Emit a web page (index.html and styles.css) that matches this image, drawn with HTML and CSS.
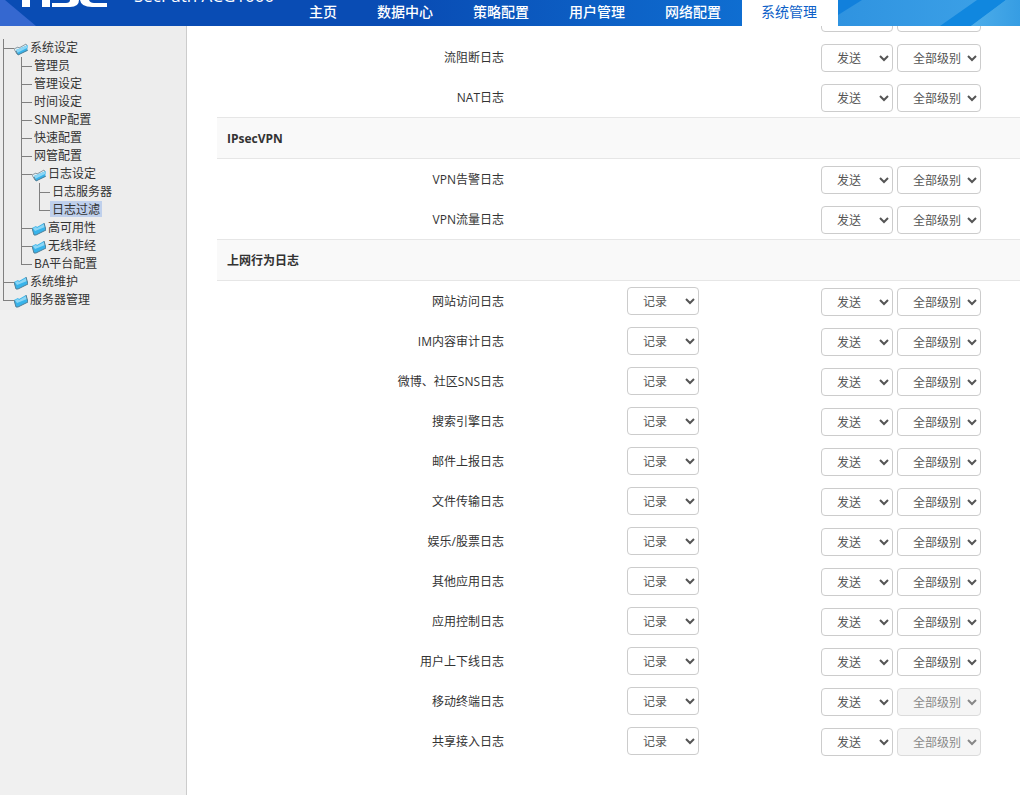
FILE: index.html
```
<!DOCTYPE html>
<html lang="zh-CN">

<head>
	<meta charset="UTF-8">
	<title>日志过滤</title>
	<link rel="stylesheet" href="styles.css">
</head>

<body>
	<svg class="defs" aria-hidden="true">
		<symbol id="folder" viewBox="0 0 14 14">
			<path d="M0 7 L4 5 L5 6 L12 2 L13 4 L4 9 L3 12 Z" fill="#e4eef2" stroke="#8a9aa3" stroke-width="1" />
			<path d="M2 8 L14 3 L13 9 L4 13 Z" fill="#37b3ea" />
			<path d="M2 8 L14 3 L13 6 L3 11 Z" fill="#8bd6f5" />
			<path d="M14 8 L4 13 L2 9" fill="none" stroke="#4f7f98" stroke-width="1" />
		</symbol>
		<symbol id="folder-closed" viewBox="0 0 14 14">
			<path d="M0 6 L4 4 L5 5 L12 1 L14 8 L4 13 L2 13 Z" fill="#37b3ea" />
			<path d="M1 6 L4 5 L5 6 L12 2 L13 5 L3 9 Z" fill="#8bd6f5" />
			<path d="M12 1 L14 8 L4 13 L2 13 L0 6" fill="none" stroke="#4f7f98" stroke-width="1" />
		</symbol>
	</svg>

	<header class="top">
		<svg class="top-art" viewBox="0 0 182 26" preserveAspectRatio="none" aria-hidden="true">
			<defs>
				<linearGradient id="sky" x1="0" y1="0" x2="1" y2="0">
					<stop offset="0" stop-color="#2f93e0" />
					<stop offset="1" stop-color="#3ea3e8" />
				</linearGradient>
				<linearGradient id="sky2" x1="0" y1="0" x2="1" y2="0">
					<stop offset="0" stop-color="#4dadea" />
					<stop offset="1" stop-color="#369de3" />
				</linearGradient>
			</defs>
			<rect width="182" height="26" fill="url(#sky)" />
			<path d="M0 0 H24 L0 15 Z" fill="#1180dc" />
			<path d="M139 0 H168 L133 26 H102 Z" fill="#1087df" />
			<path d="M168 0 H182 V26 H133 Z" fill="url(#sky2)" />
		</svg>
		<svg class="logo" viewBox="0 0 110 26" role="img" aria-label="H3C">
			<path d="M0 0 H5 L36 26 H0 Z" fill="#3568d0" />
			<g fill="#fff">
				<path d="M22 0 H30 V7 H22 Z M42 0 H50 V7 H42 Z" />
				<path d="M52 3 H66 Q70 3 70 0 H79 Q79 7 70 7 H52 Z" />
				<path d="M80 0 H89 Q90 3 94 3 H107 V7 H92 Q81 7 80 0 Z" />
			</g>
		</svg>
		<span class="product">SecPath ACG1000</span>
		<nav class="nav">
			<a href="#">主页</a>
			<a href="#">数据中心</a>
			<a href="#">策略配置</a>
			<a href="#">用户管理</a>
			<a href="#">网络配置</a>
			<a href="#" class="active">系统管理</a>
		</nav>
	</header>

	<div class="wrap">
		<aside class="side">
			<ul class="tree">
				<li><a href="#" class="dir"><svg><use href="#folder" /></svg>系统设定</a>
					<ul>
						<li><a href="#">管理员</a></li>
						<li><a href="#">管理设定</a></li>
						<li><a href="#">时间设定</a></li>
						<li><a href="#">SNMP配置</a></li>
						<li><a href="#">快速配置</a></li>
						<li><a href="#">网管配置</a></li>
						<li><a href="#" class="dir"><svg><use href="#folder" /></svg>日志设定</a>
							<ul>
								<li><a href="#">日志服务器</a></li>
								<li><a href="#" class="selected">日志过滤</a></li>
							</ul>
						</li>
						<li><a href="#" class="dir"><svg><use href="#folder-closed" /></svg>高可用性</a></li>
						<li><a href="#" class="dir"><svg><use href="#folder-closed" /></svg>无线非经</a></li>
						<li><a href="#">BA平台配置</a></li>
					</ul>
				</li>
				<li><a href="#" class="dir"><svg><use href="#folder-closed" /></svg>系统维护</a></li>
				<li><a href="#" class="dir"><svg><use href="#folder-closed" /></svg>服务器管理</a></li>
			</ul>
		</aside>

		<main class="main" id="main"></main>
	</div>

	<script src="script.js"></script>
</body>

</html>
```
FILE: styles.css
```
* {
	box-sizing: border-box;
}

body {
	margin: 0;
	height: 100vh;
	display: flex;
	flex-direction: column;
	overflow: hidden;
	font: 12px/18px "Noto Sans CJK SC", sans-serif;
	color: #333;
	background: #fff;
}

a {
	color: inherit;
	text-decoration: none;
}

.defs {
	display: none;
}

/* 顶部 */
.top {
	display: flex;
	align-items: flex-end;
	height: 26px;
	flex: none;
	overflow: hidden;
	position: relative;
	background: linear-gradient(90deg, #094cb4 40%, #0f6fd2 74%);
}

.top-art {
	position: absolute;
	right: 0;
	top: 0;
	width: 182px;
	height: 26px;
}

.logo {
	width: 110px;
	height: 26px;
	flex: none;
}

.product {
	width: 180px;
	padding-left: 24px;
	font-family: "Open Sans", sans-serif;
	font-size: 17px;
	line-height: 18px;
	align-self: flex-start;
	margin-top: -13px;
	color: #fff;
	white-space: nowrap;
}

.nav {
	display: flex;
	position: relative;
}

.nav a {
	padding: 0 21px 0 19px;
	height: 26px;
	line-height: 22px;
	font-size: 14px;
	font-weight: 500;
	color: #fff;
}

.nav .active {
	background: #fff;
	color: #0d5fc8;
	font-weight: normal;
}

.wrap {
	flex: 1;
	display: flex;
	min-height: 0;
}

/* 左侧菜单树 */
.side {
	width: 187px;
	flex: none;
	background: #f0f0f0;
	border-right: 1px solid #ccc;
}

.tree {
	padding: 13px 0 1px 3px;
	background: #ededed;
}

.side ul {
	margin: 0;
	list-style: none;
}

.tree ul {
	padding: 0 0 0 18px;
}

.tree li {
	background:
		linear-gradient(#808080, #808080) 0 0 / 1px 100% no-repeat,
		linear-gradient(#808080, #808080) 0 9px / 11px 1px no-repeat;
}

.tree li:last-child {
	background-size: 1px 9px, 11px 1px;
}

.tree a {
	display: block;
	width: max-content;
	margin-left: 11px;
	padding: 0 2px;
	height: 18px;
	line-height: 16px;
}

.tree .dir {
	display: flex;
	gap: 2px;
	padding: 0;
}

.dir svg {
	width: 14px;
	height: 14px;
	margin-top: 3px;
}

.tree .selected {
	background: linear-gradient(#bfd0ec, #bfd0ec) 0 0 / 100% 16px no-repeat;
}

/* 日志列表 */
.main {
	flex: 1;
	min-width: 0;
	padding-left: 30px;
	font-family: "Open Sans", "Noto Sans CJK SC", sans-serif;
}

.main h2 {
	margin: 0;
	padding-left: 10px;
	height: 42px;
	line-height: 42px;
	font-size: 12px;
	border: 1px solid #e6e6e6;
	border-width: 1px 0;
	background: #f9f9f9;
}

.row {
	display: grid;
	grid-template-columns: 410fr 194fr 199fr;
	align-items: center;
	height: 40px;
}

.row label {
	padding: 2px 123px 0 0;
	text-align: right;
}

.send {
	display: flex;
	gap: 4px;
	padding-top: 2px;
	grid-column: 3;
}

/* 滚动到上方、只露出底边的一行 */
.row.cut {
	height: 11px;
	align-content: end;
	overflow: hidden;
	padding-bottom: 5px;
}

select {
	width: 72px;
	height: 28px;
	padding: 0 0 2px 11px;
	font: 12px "Noto Sans CJK SC", sans-serif;
	color: #555;
	border: 1px solid #ccc;
	border-radius: 4px;
	background: #fff;
}

select.level {
	width: 84px;
}

select:disabled {
	background: #f2f2f2;
	color: #555;
}
```
FILE: script.js
```
var groups = [
	{ title: '', rows: ['会话日志', '流阻断日志', 'NAT日志'] },
	{ title: 'IPsecVPN', rows: ['VPN告警日志', 'VPN流量日志'] },
	{
		title: '上网行为日志', record: true,
		rows: ['网站访问日志', 'IM内容审计日志', '微博、社区SNS日志', '搜索引擎日志', '邮件上报日志', '文件传输日志',
			'娱乐/股票日志', '其他应用日志', '应用控制日志', '用户上下线日志', '移动终端日志', '共享接入日志']
	}
];
// 不区分级别的日志
var noLevel = ['移动终端日志', '共享接入日志'];

var html = '';
groups.forEach(function (g, i) {
	if (g.title) {
		html += '<h2>' + g.title + '</h2>';
	}
	g.rows.forEach(function (name, j) {
		var id = 'log' + i + '_' + j;
		var cut = i == 0 && j == 0;
		html += '<div class="row' + (cut ? ' cut' : '') + '">';
		if (!cut) {
			html += '<label for="' + id + '">' + name + '</label>';
		}
		if (g.record) {
			html += '<div><select id="' + id + '"><option>记录</option><option>不记录</option></select></div>';
		}
		html += '<div class="send"><select aria-label="' + name + '发送"' + (g.record ? '' : ' id="' + id + '"') + '><option>发送</option><option>不发送</option></select>' +
			'<select class="level" aria-label="' + name + '级别"' + (noLevel.indexOf(name) > -1 ? ' disabled' : '') + '><option>全部级别</option></select></div>';
		html += '</div>';
	});
});
document.getElementById('main').innerHTML = html;
```
